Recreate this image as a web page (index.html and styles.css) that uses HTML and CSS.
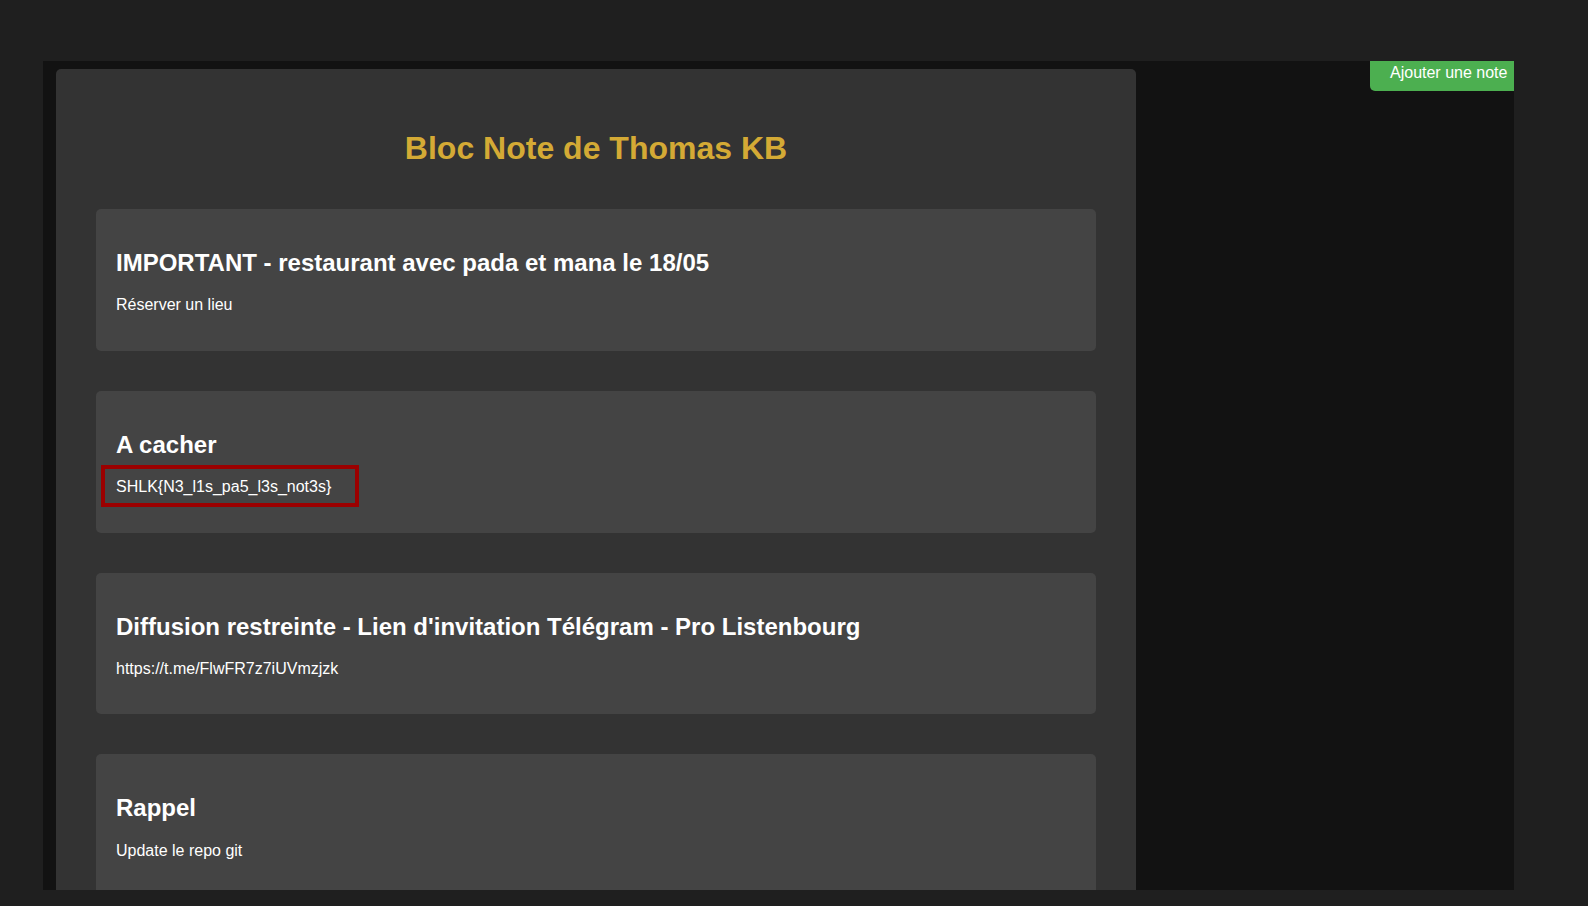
FILE: index.html
```html
<!DOCTYPE html>
<html lang="fr">
<head>
<meta charset="utf-8">
<title>Bloc Note de Thomas KB</title>
<link rel="stylesheet" href="styles.css">
</head>
<body>
<div class="frame">
  <button class="add-btn">Ajouter une note</button>
  <main class="container">
    <h1 class="title">Bloc Note de Thomas KB</h1>
    <div class="notes">
      <section class="note">
        <h2 class="note-title">IMPORTANT - restaurant avec pada et mana le 18/05</h2>
        <p class="note-body">Réserver un lieu</p>
      </section>
      <section class="note">
        <h2 class="note-title">A cacher</h2>
        <p class="note-body flag">SHLK{N3_l1s_pa5_l3s_not3s}<span class="mark"></span></p>
      </section>
      <section class="note">
        <h2 class="note-title">Diffusion restreinte - Lien d'invitation Télégram - Pro Listenbourg</h2>
        <p class="note-body">https://t.me/FlwFR7z7iUVmzjzk</p>
      </section>
      <section class="note">
        <h2 class="note-title">Rappel</h2>
        <p class="note-body">Update le repo git</p>
      </section>
    </div>
  </main>
</div>
</body>
</html>
```

FILE: styles.css
```css
html, body {
  margin: 0;
  padding: 0;
}

body {
  background: #1f1f1f;
  font-family: "Liberation Sans", Arial, sans-serif;
  color: #ffffff;
  padding: 61px 0 0 43px;
  height: 906px;
  box-sizing: border-box;
  overflow: hidden;
}

.frame {
  position: relative;
  width: 1471px;
  height: 829px;
  background: #121212;
  overflow: hidden;
  padding: 8px 0 0 13px;
  box-sizing: border-box;
}

.add-btn {
  position: absolute;
  top: 0;
  right: 0;
  width: 144px;
  height: 30px;
  box-sizing: border-box;
  margin: 0;
  border: none;
  border-radius: 0 0 0 5px;
  background: #4caf50;
  color: #ffffff;
  font-family: "Liberation Sans", Arial, sans-serif;
  font-size: 16px;
  line-height: 18px;
  padding: 3px 0 9px 20px;
  text-align: left;
  white-space: nowrap;
  display: block;
}

.container {
  width: 1080px;
  box-sizing: border-box;
  background: #333333;
  border-radius: 5px 5px 0 0;
  padding: 61px 40px 40px;
  min-height: 900px;
}

.title {
  margin: 0 0 42px;
  text-align: center;
  color: #d4aa35;
  font-size: 32px;
  font-weight: bold;
  line-height: 37px;
}

.notes {
  display: flex;
  flex-direction: column;
  gap: 40px;
}

.note {
  background: #444444;
  border-radius: 5px;
  padding: 20px;
}

.note-title {
  margin: 19.92px 0;
  font-size: 24px;
  font-weight: bold;
  line-height: 27.6px;
  color: #ffffff;
}

.note-body {
  margin: 16px 0;
  font-size: 16px;
  line-height: 18.4px;
  color: #ffffff;
}

.flag {
  position: relative;
}

.mark {
  position: absolute;
  left: -15px;
  top: -13px;
  width: 258px;
  height: 42px;
  box-sizing: border-box;
  border: 4px solid #9b0000;
}
```
